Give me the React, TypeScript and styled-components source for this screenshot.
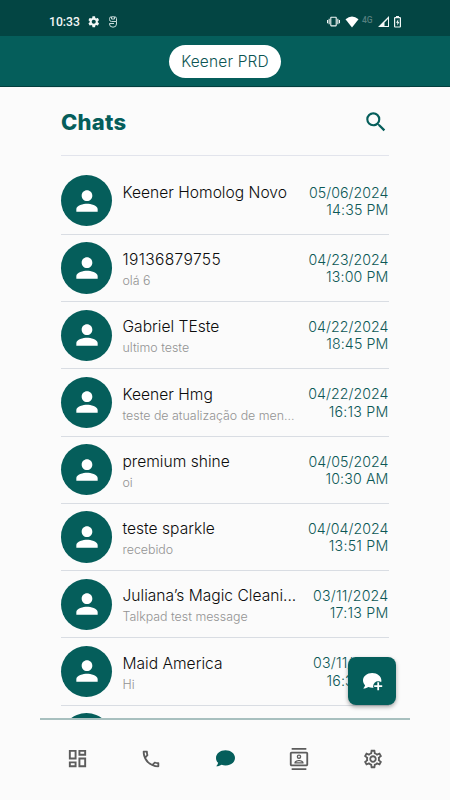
import React from 'react';
import styled, { createGlobalStyle } from 'styled-components';
import {
  MdPerson,
  MdSearch,
  MdOutlineDashboard,
  MdOutlinePhone,
  MdOutlineContacts,
  MdOutlineSettings,
  MdSettings,
  MdVibration,
} from 'react-icons/md';

const teal = '#055e5b';

const GlobalStyle = createGlobalStyle`
  * { box-sizing: border-box; }
  body { margin: 0; background: #fbfbfb; }
`;

const Screen = styled.div`
  width: 450px;
  height: 800px;
  display: flex;
  flex-direction: column;
  overflow: hidden;
  background: #fbfbfb;
  font-family: Inter, 'Liberation Sans', sans-serif;
`;

const StatusBar = styled.div`
  flex: none;
  height: 36px;
  padding: 7px 49px 0 49px;
  display: flex;
  align-items: center;
  background: #034543;
  color: #f2f7f6;
`;

const Clock = styled.span`
  width: 38px;
  font: 500 12.2px/16px Roboto, sans-serif;
  white-space: nowrap;
`;

const StatusGroup = styled.div<{ $end?: boolean }>`
  display: flex;
  align-items: center;
  margin-left: ${(p) => (p.$end ? 'auto' : '0')};
  gap: ${(p) => (p.$end ? '5px' : '7px')};
  svg { display: block; flex: none; }
`;

const Network = styled.span`
  width: 11px;
  margin: 0 0 4px -2px;
  color: #557f7e;
  font: 500 8.5px/10px Roboto, sans-serif;
`;

const TopBar = styled.header`
  flex: none;
  height: 51px;
  display: flex;
  justify-content: center;
  padding-top: 9px;
  background: ${teal};
  border-bottom: 1px solid #033f3e;
`;

const AccountPill = styled.div`
  width: 112px;
  height: 33px;
  border-radius: 17px;
  background: #fff;
  color: #0d5553;
  font: 350 15.5px/33px Inter, sans-serif;
  letter-spacing: 0.15px;
  text-align: center;
  white-space: nowrap;
`;

const Content = styled.main`
  flex: none;
  width: 370px;
  height: 633px;
  margin: 0 auto;
  padding: 0 21px;
  overflow: hidden;
  border-top: 1px solid #e6eeee;
  border-bottom: 2px solid #a8c0bf;
`;

const Heading = styled.div`
  height: 68px;
  display: flex;
  align-items: center;
  justify-content: space-between;
  border-bottom: 1px solid #e2e4ec;
  color: ${teal};
  svg { display: block; }
`;

const Title = styled.h1`
  margin: 0;
  font-size: 22px;
  line-height: 30px;
  font-weight: 800;
  letter-spacing: 0.25px;
`;

const List = styled.div`
  padding-top: 11.5px;
`;

const Row = styled.div`
  height: 67.25px;
  display: flex;
  padding-top: 7.6px;
  border-bottom: 1px solid #d9dde3;
`;

const Avatar = styled.div`
  flex: none;
  width: 51.2px;
  height: 51.2px;
  border-radius: 50%;
  display: flex;
  align-items: center;
  justify-content: center;
  background: ${teal};
  color: #fff;
`;

const Texts = styled.div`
  width: 178px;
  margin-left: 10.3px;
  padding-top: 6.8px;
`;

const Name = styled.div<{ $numeric: boolean }>`
  color: #0c0c0c;
  font-size: 15.6px;
  line-height: 22px;
  font-weight: 320;
  letter-spacing: ${(p) => (p.$numeric ? '0.35px' : '0')};
  white-space: nowrap;
`;

const Preview = styled.div`
  color: #939393;
  font-size: 12.4px;
  line-height: 20px;
  font-weight: 320;
  white-space: nowrap;
`;

const Stamp = styled.div`
  margin-left: auto;
  padding: 8.6px 0.5px 0 0;
  color: #0c5856;
  font-size: 14.2px;
  line-height: 17.3px;
  font-weight: 320;
  text-align: right;
  white-space: nowrap;
`;

const StampLine = styled.div<{ $track: number }>`
  letter-spacing: ${(p) => p.$track}px;
`;

const Fab = styled.button`
  position: absolute;
  left: 348px;
  top: 657px;
  width: 48px;
  height: 48px;
  padding: 2px 0 0 2px;
  border: 0;
  border-radius: 8px;
  display: flex;
  align-items: center;
  justify-content: center;
  background: ${teal};
  box-shadow: 0 2px 4px rgba(0, 0, 0, 0.35);
`;

const NavBar = styled.nav`
  flex: 1;
  width: 370px;
  margin: 0 auto;
  padding-bottom: 3px;
  display: flex;
  align-items: center;
`;

const NavItem = styled.div<{ $active?: boolean }>`
  flex: 1;
  display: flex;
  justify-content: center;
  color: ${(p) => (p.$active ? teal : '#5c5c5c')};
`;

const chats = [
  ['Keener Homolog Novo', '', '05/06/2024', '14:35 PM'],
  ['19136879755', 'olá 6', '04/23/2024', '13:00 PM'],
  ['Gabriel TEste', 'ultimo teste', '04/22/2024', '18:45 PM'],
  ['Keener Hmg', 'teste de atualização de men...', '04/22/2024', '16:13 PM'],
  ['premium shine', 'oi', '04/05/2024', '10:30 AM'],
  ['teste sparkle', 'recebido', '04/04/2024', '13:51 PM'],
  ['Juliana’s Magic Cleani...', 'Talkpad test message', '03/11/2024', '17:13 PM'],
  ['Maid America', 'Hi', '03/11/2024', '16:36 PM'],
  ['', '', '', ''],
];

// Strings with several narrow "1" digits get wider tracking.
const tracking = (text: string) => 0.03 + 0.1 * (text.split('1').length - 1);

const bubble =
  'M9.2 0C4.1 0 0 3.3 0 7.4c0 1.9.8 3.5 2.1 4.8-.3 1.3-1 2.5-1.9 3.4 2 .1 3.9-.6 5.2-1.5 1.2.4 2.5.7 3.8.7 5.100 0 9.200-3.300 9.200-7.400S14.300 0 9.200 0Z';

export default function App() {
  return (
    <Screen>
      <GlobalStyle />
      <StatusBar>
        <Clock>10:33</Clock>
        <StatusGroup>
          <MdSettings size={13.5} />
          <svg width="10" height="12" viewBox="0 0 10 12" fill="none" stroke="#c8dad9">
            <path d="M8.500 5.500V2.500Q8.500 .8 6.500 .8H3.500Q1.500 .8 1.500 2.500V3.500Q1.500 5.500 3.500 5.500H8.500V8A3.500 3.200 0 0 1 1.500 8V7.500H6" />
            <path d="M3.500 1v2h3V1" />
          </svg>
        </StatusGroup>
        <StatusGroup $end>
          <MdVibration size={13} />
          <svg width="14" height="12" viewBox="0 0 14 12"><path d="M.5 3.200Q7-2.200 13.500 3.200L7 11.500Z" fill="#fff" /></svg>
          <Network>4G</Network>
          <svg width="11" height="11" viewBox="0 0 11 11"><path fillRule="evenodd" d="M0 11 11 0v11ZM6.500 10h3.500V3L6.500 6.500Z" fill="#f2f7f6" /></svg>
          <svg width="7" height="12" viewBox="0 0 7 12">
            <path d="M2 .5h3" stroke="#f2f7f6" />
            <rect x=".6" y="1.600" width="5.800" height="9.400" rx=".5" fill="none" stroke="#f2f7f6" strokeWidth="1.200" />
            <path d="M4.200 3.200 2 6.800h1.300v2.800L5.300 6H4.200Z" fill="#f2f7f6" />
          </svg>
        </StatusGroup>
      </StatusBar>
      <TopBar>
        <AccountPill>Keener PRD</AccountPill>
      </TopBar>
      <Content>
        <Heading>
          <Title>Chats</Title>
          <MdSearch size={26} />
        </Heading>
        <List>
          {chats.map(([name, preview, date, time], i) => (
            <Row key={i}>
              <Avatar><MdPerson size={32} /></Avatar>
              <Texts>
                <Name $numeric={/^\d+$/.test(name)}>{name}</Name>
                <Preview>{preview}</Preview>
              </Texts>
              <Stamp>
                <StampLine $track={tracking(date)}>{date}</StampLine>
                <StampLine $track={tracking(time)}>{time}</StampLine>
              </Stamp>
            </Row>
          ))}
        </List>
      </Content>
      <NavBar>
        <NavItem><MdOutlineDashboard size={23} /></NavItem>
        <NavItem><MdOutlinePhone size={22} /></NavItem>
        <NavItem $active>
          <svg width="19" height="17" viewBox="0 0 18.400 16"><path d={bubble} fill="currentColor" /></svg>
        </NavItem>
        <NavItem><MdOutlineContacts size={22} /></NavItem>
        <NavItem><MdOutlineSettings size={22} /></NavItem>
      </NavBar>
      <Fab aria-label="New chat">
        <svg width="20" height="18" viewBox="0 0 20 18">
          <path d={bubble} fill="#fff" />
          <circle cx="15.200" cy="13.200" r="5" fill={teal} />
          <path d="M15.200 9.200v8M11.200 13.200h8" stroke="#fff" strokeWidth="1.800" />
        </svg>
      </Fab>
    </Screen>
  );
}
